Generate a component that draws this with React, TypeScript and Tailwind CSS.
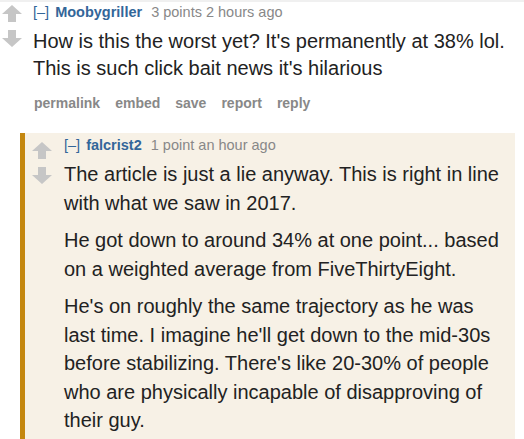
import React from "react";

function Arrow({ down = false }: { down?: boolean }) {
  return (
    <svg width="20" height="17" viewBox="0 0 20 17" className={down ? "rotate-180" : ""}>
      <path d="M10 0 L20 9 L14 9 L14 17 L6 17 L6 9 L0 9 Z" fill="#c6c6c6" />
    </svg>
  );
}

function Votes() {
  return (
    <div className="flex flex-col items-center gap-[8px] w-[20px]">
      <Arrow />
      <Arrow down />
    </div>
  );
}

function Tagline({ author, meta }: { author: string; meta: string }) {
  return (
    <div className="text-[14.5px] leading-[18px] flex items-baseline">
      <span className="text-[#369]">[–]</span>
      <span className="text-[#369] font-bold ml-[6px]">{author}</span>
      <span className="text-[#888] ml-[9px]">{meta}</span>
    </div>
  );
}

export default function App() {
  return (
    <div
      className="w-[524px] h-[439px] overflow-hidden bg-white border-t-2 border-[#f0f0f0]"
      style={{ fontFamily: '"Liberation Sans", Arial, sans-serif' }}
    >
      <div className="flex pl-[2px] pt-[3px]">
        <Votes />
        <div className="ml-[11px] -mt-[2px]">
          <Tagline author="Moobygriller" meta="3 points 2 hours ago" />
          <p className="text-[20px] leading-[27px] text-[#222] mt-[7px]">
            How is this the worst yet? It's permanently at 38% lol.
            <br />
            This is such click bait news it's hilarious
          </p>
          <div className="flex gap-[15px] text-[14px] font-bold text-[#888] mt-[11px] ml-[1px]">
            <span>permalink</span>
            <span>embed</span>
            <span>save</span>
            <span>report</span>
            <span>reply</span>
          </div>
        </div>
      </div>

      <div className="ml-[20px] mr-[9px] mt-[19px] bg-[#f7f1e6] border-l-[5px] border-[#c4870f] flex pl-[7px] pt-[3px] pb-[20px]">
        <div className="pt-[6px]">
          <Votes />
        </div>
        <div className="ml-[12px]">
          <Tagline author="falcrist2" meta="1 point an hour ago" />
          <div className="text-[20px] leading-[28.5px] text-[#222] mt-[6px] flex flex-col gap-[9px]">
            <p>
              The article is just a lie anyway. This is right in line
              <br />
              with what we saw in 2017.
            </p>
            <p>
              He got down to around 34% at one point... based
              <br />
              on a weighted average from FiveThirtyEight.
            </p>
            <p>
              He's on roughly the same trajectory as he was
              <br />
              last time. I imagine he'll get down to the mid-30s
              <br />
              before stabilizing. There's like 20-30% of people
              <br />
              who are physically incapable of disapproving of
              <br />
              their guy.
            </p>
          </div>
        </div>
      </div>
    </div>
  );
}
